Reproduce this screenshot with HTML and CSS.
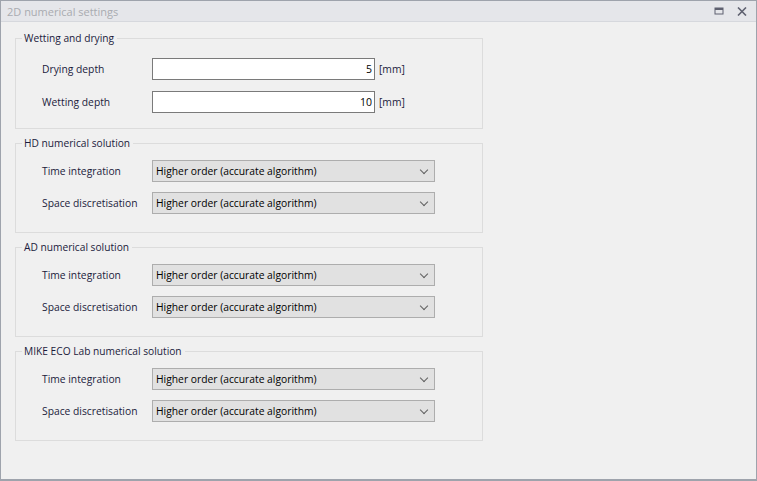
FILE: index.html
```html
<!DOCTYPE html>
<html lang="en">
<head>
  <meta charset="UTF-8">
  <title>2D numerical settings</title>
  <link rel="stylesheet" href="styles.css">
</head>
<body>
  <div class="window">
    <div class="titlebar">
      <span class="title">2D numerical settings</span>
      <div class="title-buttons">
        <svg width="10" height="8" viewBox="0 0 10 8"><rect x="1" y="1" width="8" height="6" fill="none" stroke="#5f6170" stroke-width="1"/><rect x="1" y="1" width="8" height="2" fill="#5f6170"/></svg>
        <svg width="10" height="9" viewBox="0 0 10 9"><path d="M1 0.5 L9 8.5 M9 0.5 L1 8.5" stroke="#5f6170" stroke-width="1.6"/></svg>
      </div>
    </div>

    <div class="content">
      <fieldset class="group wetting">
        <legend>Wetting and drying</legend>
        <div class="row">
          <label>Drying depth</label>
          <input class="num" type="text" value="5">
          <span class="unit">[mm]</span>
        </div>
        <div class="row">
          <label>Wetting depth</label>
          <input class="num" type="text" value="10">
          <span class="unit">[mm]</span>
        </div>
      </fieldset>

      <fieldset class="group">
        <legend>HD numerical solution</legend>
        <div class="row">
          <label>Time integration</label>
          <div class="combo">Higher order (accurate algorithm)<span class="chev"></span></div>
        </div>
        <div class="row">
          <label>Space discretisation</label>
          <div class="combo">Higher order (accurate algorithm)<span class="chev"></span></div>
        </div>
      </fieldset>

      <fieldset class="group">
        <legend>AD numerical solution</legend>
        <div class="row">
          <label>Time integration</label>
          <div class="combo">Higher order (accurate algorithm)<span class="chev"></span></div>
        </div>
        <div class="row">
          <label>Space discretisation</label>
          <div class="combo">Higher order (accurate algorithm)<span class="chev"></span></div>
        </div>
      </fieldset>

      <fieldset class="group">
        <legend>MIKE ECO Lab numerical solution</legend>
        <div class="row">
          <label>Time integration</label>
          <div class="combo">Higher order (accurate algorithm)<span class="chev"></span></div>
        </div>
        <div class="row">
          <label>Space discretisation</label>
          <div class="combo">Higher order (accurate algorithm)<span class="chev"></span></div>
        </div>
      </fieldset>
    </div>
  </div>
</body>
</html>
```

FILE: styles.css
```css
body {
  margin: 0;
  padding: 0;
  font-family: "Open Sans", sans-serif;
  font-size: 10.3px;
  color: #1b1b3c;
  background: #f0f0f0;
}

.window {
  box-sizing: border-box;
  width: 757px;
  height: 481px;
  border: 1px solid #9ea3ac;
  border-bottom-width: 2px;
  background: #f0f0f0;
}

.titlebar {
  height: 20px;
  background: #e5e6ea;
  border-bottom: 1px solid #d6d8dd;
  display: flex;
  align-items: center;
  justify-content: space-between;
  padding: 0 9px 0 6px;
}

.title {
  color: #a9abb0;
  font-size: 11px;
}

.title-buttons {
  display: flex;
  align-items: center;
  gap: 13px;
}

.content {
  padding: 8px 0 0 14px;
}

.group {
  box-sizing: border-box;
  width: 468px;
  margin: 0 0 6px 0;
  padding: 9px 0 18px 26px;
  border: 1px solid #dcdcdc;
}

.group.wetting {
  padding-top: 12px;
  padding-bottom: 15px;
}

legend {
  margin-left: -20px;
  padding: 0 3px 0 2px;
  line-height: 16px;
  font-size: 10.2px;
}

.row {
  display: flex;
  align-items: center;
  height: 22px;
}

.row + .row {
  margin-top: 10px;
}

.wetting .row + .row {
  margin-top: 11px;
}

label {
  width: 110px;
  flex: none;
}

.num {
  box-sizing: border-box;
  width: 223px;
  height: 22px;
  border: 1px solid #7a7a7a;
  background: #fff;
  text-align: right;
  padding: 0 2px;
  font-family: inherit;
  font-size: 10.5px;
  color: #000;
  outline: none;
}

.unit {
  margin-left: 4px;
}

.combo {
  box-sizing: border-box;
  position: relative;
  width: 283px;
  height: 22px;
  line-height: 20px;
  border: 1px solid #adadad;
  background: #e1e1e1;
  padding-left: 3px;
  color: #000;
}

.chev {
  position: absolute;
  right: 7px;
  top: 6px;
  width: 5px;
  height: 5px;
  border-right: 1px solid #606060;
  border-bottom: 1px solid #606060;
  transform: rotate(45deg);
}
```
